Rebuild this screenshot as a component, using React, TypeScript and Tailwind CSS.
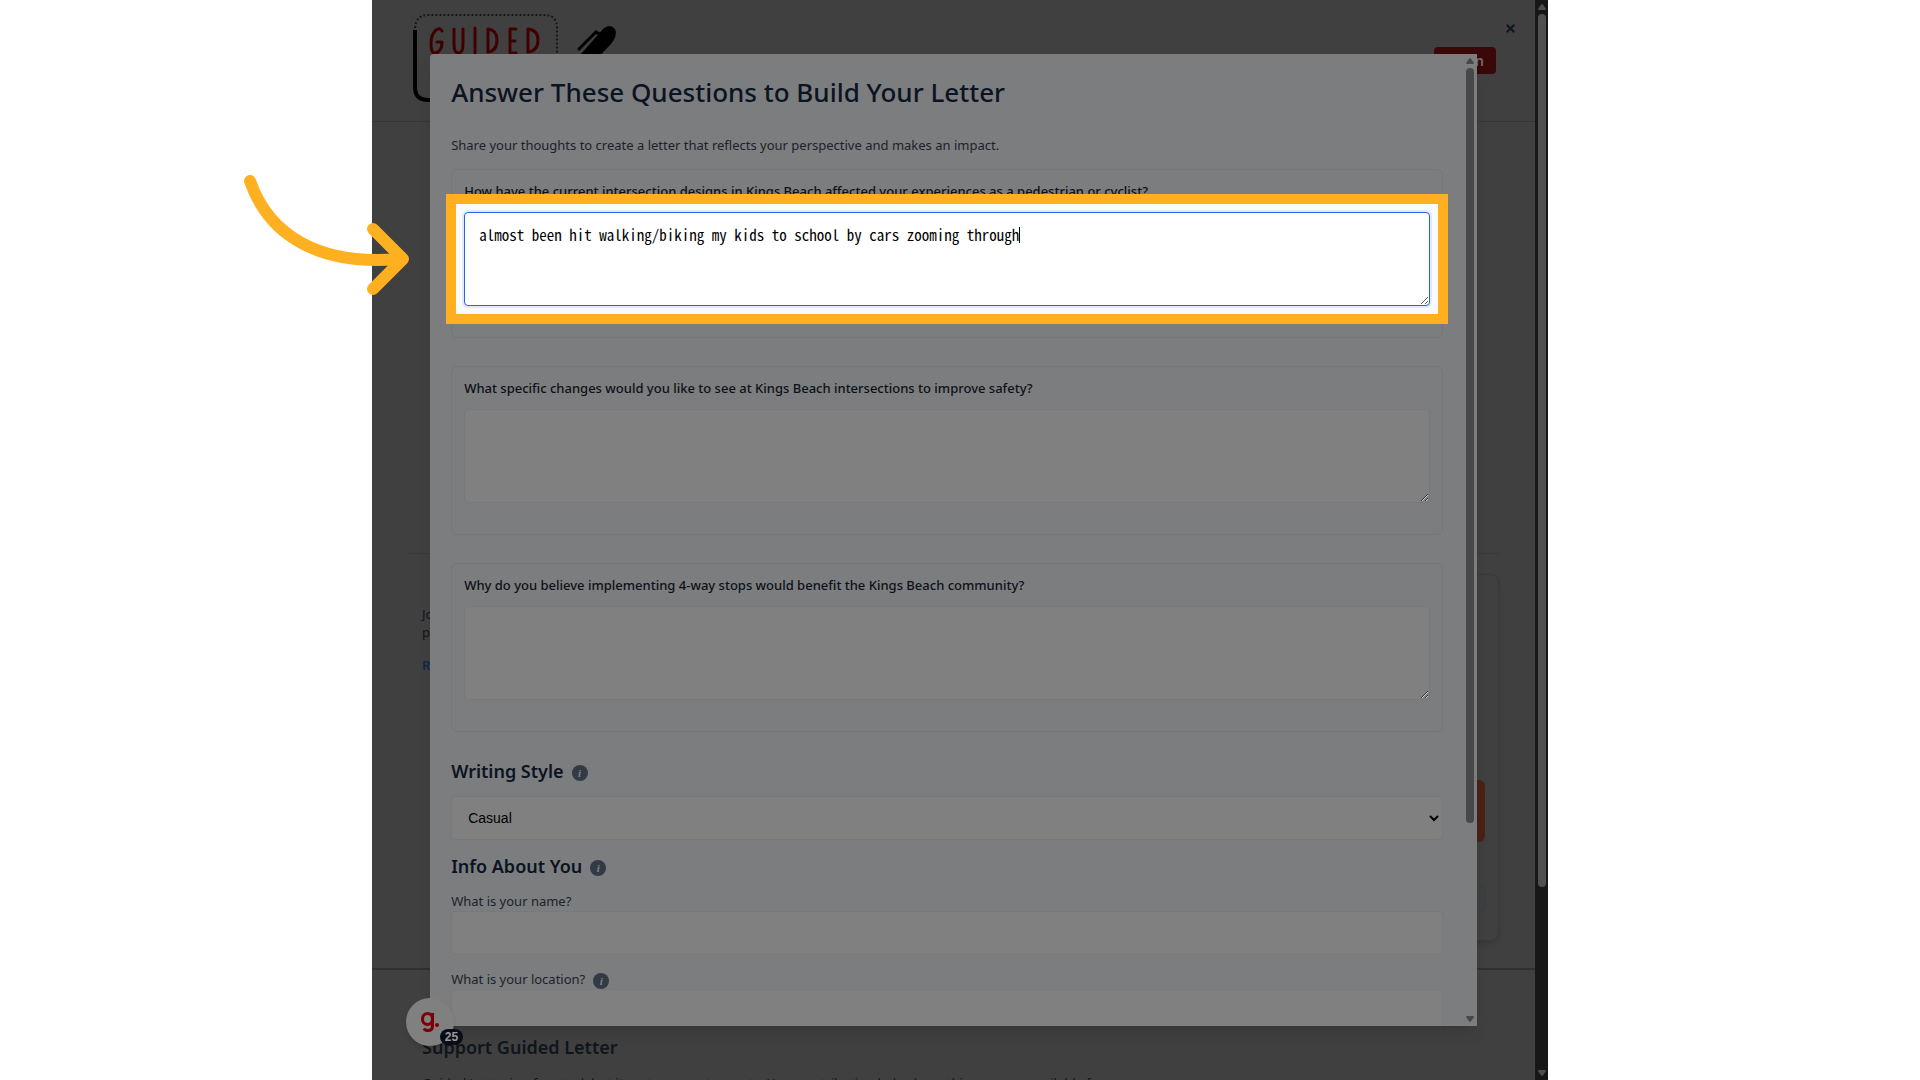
import type { ReactNode } from "react";

const questions = [
  {
    id: "experience",
    label:
      "How have the current intersection designs in Kings Beach affected your experiences as a pedestrian or cyclist?",
    value: "almost been hit walking/biking my kids to school by cars zooming through",
  },
  {
    id: "changes",
    label: "What specific changes would you like to see at Kings Beach intersections to improve safety?",
    value: "",
  },
  {
    id: "benefit",
    label: "Why do you believe implementing 4-way stops would benefit the Kings Beach community?",
    value: "",
  },
];

function InfoIcon() {
  return (
    <span className="mt-1 flex h-4 w-4 shrink-0 items-center justify-center rounded-full bg-[#323a46] font-['Liberation_Serif',serif] text-[11px] leading-4 font-bold text-[#808080] italic">
      i
    </span>
  );
}

function Scrollbar({ children, className }: { children: ReactNode; className: string }) {
  return (
    <div aria-hidden="true" className={`flex shrink-0 flex-col items-center ${className}`}>
      <svg width="8" height="6" viewBox="0 0 8 6" fill="currentColor">
        <path d="M3 .7Q4-.5 5 .7L7.7 4.6Q8.200 6 7 6H1Q-.2 6 .3 4.600Z" />
      </svg>
      <div className="min-h-0 w-2 flex-1 py-1">{children}</div>
      <svg width="8" height="6" viewBox="0 0 8 6" fill="currentColor">
        <path d="M3 5.300Q4 6.500 5 5.300L7.700 1.400Q8.200 0 7 0H1Q-.2 0 .3 1.400Z" />
      </svg>
    </div>
  );
}

function Logo() {
  return (
    <svg width="210" height="90" viewBox="0 0 210 90" role="img" aria-label="Guided Letter">
      <path
        d="M2 15Q3 2 15 2H131Q144 2 144 15V60"
        fill="none"
        stroke="#171717"
        strokeWidth="2"
        strokeDasharray="2 2"
      />
      <path d="M2 17V74Q2 87 15 87H100" fill="none" stroke="#000" strokeWidth="4" />
      <g fill="none" stroke="#400000" strokeWidth="3" strokeLinecap="round" strokeLinejoin="round">
        <path d="M29 18Q27 14 23 17Q18 21 18 31Q18 41 23 40Q29 38 29 29H24" />
        <path d="M41 16V31Q41 40 45.500 40Q50 40 50 31V16" />
        <path d="M62 15V40" />
        <path d="M75 16V39Q84 38 84 27Q84 17 75 16Z" />
        <path d="M103 16H97V40H103M97 28H102" />
        <path d="M115 16V39Q125 38 125 27Q125 17 115 16Z" />
      </g>
      <path d="M160 50L190 16Q197 10 202 16Q205 22 198 31L178 52Z" fill="#000" />
      <path d="M166 36L183 19L188 22" fill="none" stroke="#000" strokeWidth="3" strokeLinecap="round" />
    </svg>
  );
}

function Page() {
  return (
    <div className="flex h-full flex-col overflow-hidden text-[#10151d]">
      <header className="flex h-[122px] shrink-0 items-start justify-between border-b border-[#363636] pt-[13px] pr-[39px] pl-[41px]">
        <Logo />
        <nav className="flex items-center gap-11 pt-[34px] text-sm font-semibold">
          <a href="#how">How it works</a>
          <a href="#login" className="rounded bg-[#3a0808] px-3 py-1 leading-[19px] text-[#707070]">
            Login
          </a>
        </nav>
      </header>
      <main className="mx-9 flex flex-1 flex-col">
        <div className="h-[432px] shrink-0 border-b border-[#393939]" />
        <div className="flex justify-between pt-5">
          <div className="w-1/2 px-[14px] pt-[31px] text-[13px] leading-[18px]">
            <p>Join us in making Kings Beach safer for every</p>
            <p>pedestrian and cyclist.</p>
            <a href="#more" className="mt-[15px] block font-semibold text-[#12264f]">
              Read more
            </a>
          </div>
          <div className="h-[367px] w-1/3 rounded-lg border border-[#393939] px-[13px] pt-[205px] shadow-md">
            <div className="h-[62px] rounded-md bg-[#4a2115]" />
            <div className="mt-[43px] h-7 rounded-md border border-[#3a3d3d] bg-[#3d4141]" />
          </div>
        </div>
      </main>
      <footer className="h-[112px] shrink-0 border-t-2 border-[#303030] px-[50px] pt-[63px]">
        <h2 className="text-lg leading-7 font-semibold">Support Guided Letter</h2>
        <p className="mt-3 text-[13px] leading-5 whitespace-nowrap">
          Guided Letter is a free tool, but it costs money to create. Your contribution helps keep this resource
          available for
        </p>
      </footer>
    </div>
  );
}

function Question({ id, label, value }: { id: string; label: string; value: string }) {
  return (
    <div className="rounded-md border border-[#747678] px-3 pt-[11px] pb-[31px]">
      <label htmlFor={id} className="block text-[13px] leading-5 font-medium text-[#0c1119]">
        {label}
      </label>
      <div className="relative mt-[11px]">
        {value && <div className="absolute -inset-[18px] border-10 border-[#ffb020] bg-[#f8fafc]" />}
        <textarea
          id={id}
          defaultValue={value}
          className={`relative block h-[94px] w-full resize-y rounded border px-[14px] py-3 font-['Noto_Sans_Mono_CJK_JP','DejaVu_Sans_Mono',monospace] text-[15px] leading-5 text-black outline-none ${
            value ? "border-[#2563eb] bg-white ring-2 ring-[#2563eb]/10" : "border-[#76797d] bg-[#808080]"
          }`}
        />
        {value && <span className="absolute top-[15px] left-[555px] h-4 w-px bg-black" />}
      </div>
    </div>
  );
}

function LetterForm() {
  return (
    <form className="min-w-0 flex-1 pt-5 pr-5 pl-[21px] text-[#1b222c]">
      <h1 className="text-[26px] leading-9 font-medium text-[#0c1322]">
        Answer These Questions to Build Your Letter
      </h1>
      <p className="mt-[25px] text-[13px] leading-5">
        Share your thoughts to create a letter that reflects your perspective and makes an impact.
      </p>
      <div className="mt-[14px] flex flex-col gap-7">
        {questions.map((q) => (
          <Question key={q.id} {...q} />
        ))}
      </div>

      <div className="mt-[25px] flex items-center gap-2">
        <label htmlFor="style" className="text-lg leading-7 font-semibold text-[#0c1322]">
          Writing Style
        </label>
        <InfoIcon />
      </div>
      <select
        id="style"
        className="mt-[11px] block h-11 w-full rounded border border-[#76797d] bg-[#808080] pl-3 font-['Liberation_Sans',sans-serif] text-sm text-black"
      >
        <option>Casual</option>
        <option>Formal</option>
      </select>

      <div className="mt-3 flex items-center gap-2">
        <h2 className="text-lg leading-7 font-semibold text-[#0c1322]">Info About You</h2>
        <InfoIcon />
      </div>
      <label htmlFor="name" className="mt-[11px] block text-[13px] leading-5">
        What is your name?
      </label>
      <input id="name" className="block h-11 w-full rounded border border-[#76797d] bg-[#808080] px-[14px]" />
      <div className="mt-[14px] flex items-center gap-2">
        <label htmlFor="location" className="text-[13px] leading-5">
          What is your location?
        </label>
        <InfoIcon />
      </div>
      <input id="location" className="block h-11 w-full rounded border border-[#76797d] bg-[#808080] px-[14px]" />
    </form>
  );
}

export default function App() {
  return (
    <div className="h-screen overflow-hidden bg-white font-['Noto_Sans','Open_Sans',sans-serif]">
      <div className="relative mx-auto flex h-full w-[61.25%] bg-[#404040]">
        <div className="relative min-w-0 flex-1">
          <Page />
          <button aria-label="Close" className="absolute top-6 right-5 text-[#10151d]">
            <svg width="9" height="9" viewBox="0 0 9 9" stroke="currentColor" strokeWidth="2">
              <path d="M.7.7L8.300 8.300M8.300.7L.7 8.300" />
            </svg>
          </button>

          <div className="absolute inset-0 flex items-center justify-center">
            <div className="flex h-[90%] w-[90%] overflow-hidden rounded-tl bg-[#7c7d7f] shadow-lg">
              <LetterForm />
              <Scrollbar className="w-[14px] py-1 text-[#484848]">
                <div className="h-[80%] rounded-full bg-[#484848]" />
              </Scrollbar>
            </div>
          </div>

          <button
            aria-label="Open guide, 25 steps"
            className="absolute bottom-[34px] left-[34px] flex h-12 w-12 items-center justify-center rounded-full bg-[#808080] shadow-md"
          >
            <svg width="18" height="20" viewBox="0 0 18 20" fill="none" stroke="#780006" strokeWidth="3">
              <ellipse cx="6.500" cy="7" rx="5" ry="5.500" />
              <path d="M11.500 1V14Q11.500 18.500 7 18.500Q4 18.500 3 16.500" />
              <circle cx="16" cy="13" r="2" fill="#780006" stroke="none" />
            </svg>
            <span className="absolute top-[31px] left-[34px] flex h-4 w-[23px] items-center justify-center rounded-full bg-[#080d17] font-['Liberation_Sans',sans-serif] text-xs font-bold text-[#999]">
              25
            </span>
          </button>
        </div>

        <Scrollbar className="w-[13px] bg-[#171717] py-1 text-[#505050]">
          <div className="h-[83%] rounded-full bg-[#505050]" />
        </Scrollbar>

        <svg
          width="170"
          height="130"
          viewBox="0 0 170 130"
          fill="none"
          stroke="#ffb020"
          strokeWidth="12"
          strokeLinecap="round"
          strokeLinejoin="round"
          className="absolute top-[170px] -left-[132px]"
        >
          <path d="M10 11C29 66 80 96 159 89" />
          <path d="M133 59L163 89L133 119" />
        </svg>
      </div>
    </div>
  );
}
